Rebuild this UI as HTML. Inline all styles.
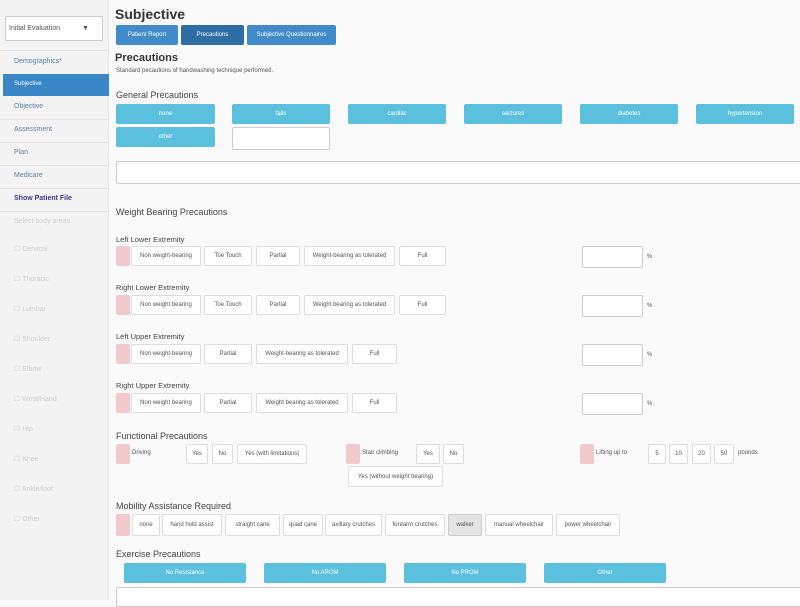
<!DOCTYPE html><html><head><style>
*{box-sizing:border-box;margin:0;padding:0}
body{width:800px;height:600px;overflow:hidden;background:#fafafa;font-family:"Liberation Sans",sans-serif;position:relative;color:#333}
div,span{position:absolute}
.side{left:0;top:0;width:109px;height:600px;background:#f3f3f3;border-right:1px solid #e4e4e4}
.si{left:14px;font-size:7px;color:#5a7fa8}
.sl{left:0;width:109px;height:1px;background:#e6e6e6}
.fd{left:14px;font-size:7px;color:#cfcfcf}
.b{background:#fff;border:1px solid #ddd;border-radius:2px;font-size:6px;color:#555;text-align:center;display:flex;align-items:center;justify-content:center;white-space:nowrap}
.r{background:#f2c9cc;border-radius:2px;width:14px}
.c{background:#5bc0de;border-radius:2px;font-size:6px;color:#fff;display:flex;align-items:center;justify-content:center;height:20px}
.t{background:#428bca;color:#fff;font-size:6px;display:flex;align-items:center;justify-content:center;border-radius:2px;height:20px;top:25px}
.h{font-size:9px;color:#444}
.lb{font-size:7.5px;color:#444}
.in{background:#fff;border:1px solid #ccc;border-radius:2px}
.tx{font-size:6px;color:#555}
</style></head><body>
<div class="side">
<div class="in" style="left:5px;top:16px;width:98px;height:25px;font-size:7px;color:#555;padding:8px 3px">Initial Evaluation<span style="left:76px;top:8px;font-size:7px">▼</span></div>
<div class="sl" style="top:50px"></div>
<div class="si" style="top:58px">Demographics*</div>
<div style="left:3px;top:74px;width:106px;height:22px;background:#3a87c8"></div>
<div class="si" style="top:81px;color:#fff;font-size:6px">Subjective</div>
<div class="si" style="top:103px">Objective</div>
<div class="sl" style="top:119px"></div>
<div class="si" style="top:126px">Assessment</div>
<div class="sl" style="top:142px"></div>
<div class="si" style="top:149px">Plan</div>
<div class="sl" style="top:165px"></div>
<div class="si" style="top:172px">Medicare</div>
<div class="sl" style="top:188px"></div>
<div class="si" style="top:195px;color:#3a3a8a;font-weight:bold">Show Patient File</div>
<div class="sl" style="top:211px"></div>
<div class="fd" style="top:218px">Select body areas</div>
<div class="fd" style="top:245px">☐ Cervical</div>
<div class="fd" style="top:275px">☐ Thoracic</div>
<div class="fd" style="top:305px">☐ Lumbar</div>
<div class="fd" style="top:335px">☐ Shoulder</div>
<div class="fd" style="top:365px">☐ Elbow</div>
<div class="fd" style="top:395px">☐ Wrist/Hand</div>
<div class="fd" style="top:425px">☐ Hip</div>
<div class="fd" style="top:455px">☐ Knee</div>
<div class="fd" style="top:485px">☐ Ankle/foot</div>
<div class="fd" style="top:515px">☐ Other</div>
</div>

<div style="left:115px;top:6px;font-size:14px;font-weight:bold;color:#333">Subjective</div>
<div class="t" style="left:116px;width:62px">Patient Report</div>
<div class="t" style="left:181px;width:63px;background:#2f6ea5">Precautions</div>
<div class="t" style="left:247px;width:89px">Subjective Questionnaires</div>
<div style="left:115px;top:52px;font-size:11px;font-weight:bold;color:#333">Precautions</div>
<div class="tx" style="left:116px;top:68px">Standard pecautions of handwashing technique performed.</div>
<div class="h" style="left:116px;top:90px">General Precautions</div>
<div class="c" style="left:116px;top:104px;width:99px">none</div>
<div class="c" style="left:232px;top:104px;width:98px">falls</div>
<div class="c" style="left:348px;top:104px;width:98px">cardiac</div>
<div class="c" style="left:464px;top:104px;width:98px">seizures</div>
<div class="c" style="left:580px;top:104px;width:98px">diabetes</div>
<div class="c" style="left:696px;top:104px;width:98px">hypertension</div>
<div class="c" style="left:116px;top:127px;width:99px">other</div>
<div class="in" style="left:232px;top:127px;width:98px;height:23px"></div>
<div class="in" style="left:116px;top:161px;width:690px;height:23px"></div>

<div class="h" style="left:116px;top:207px">Weight Bearing Precautions</div>

<div class="lb" style="left:116px;top:235px">Left Lower Extremity</div>
<div class="r" style="left:116px;top:246px;height:20px"></div>
<div class="b" style="left:131px;top:246px;width:70px;height:20px">Non weight-bearing</div>
<div class="b" style="left:204px;top:246px;width:48px;height:20px">Toe Touch</div>
<div class="b" style="left:256px;top:246px;width:44px;height:20px">Partial</div>
<div class="b" style="left:304px;top:246px;width:91px;height:20px">Weight-bearing as tolerated</div>
<div class="b" style="left:399px;top:246px;width:47px;height:20px">Full</div>
<div class="in" style="left:582px;top:246px;width:61px;height:22px"></div><div class="tx" style="left:647px;top:254px">%</div>

<div class="lb" style="left:116px;top:283px">Right Lower Extremity</div>
<div class="r" style="left:116px;top:295px;height:20px"></div>
<div class="b" style="left:131px;top:295px;width:70px;height:20px">Non weight bearing</div>
<div class="b" style="left:204px;top:295px;width:48px;height:20px">Toe Touch</div>
<div class="b" style="left:256px;top:295px;width:44px;height:20px">Partial</div>
<div class="b" style="left:304px;top:295px;width:91px;height:20px">Weight bearing as tolerated</div>
<div class="b" style="left:399px;top:295px;width:47px;height:20px">Full</div>
<div class="in" style="left:582px;top:295px;width:61px;height:22px"></div><div class="tx" style="left:647px;top:303px">%</div>

<div class="lb" style="left:116px;top:332px">Left Upper Extremity</div>
<div class="r" style="left:116px;top:344px;height:20px"></div>
<div class="b" style="left:131px;top:344px;width:70px;height:20px">Non weight-bearing</div>
<div class="b" style="left:204px;top:344px;width:48px;height:20px">Partial</div>
<div class="b" style="left:256px;top:344px;width:92px;height:20px">Weight-bearing as tolerated</div>
<div class="b" style="left:352px;top:344px;width:45px;height:20px">Full</div>
<div class="in" style="left:582px;top:344px;width:61px;height:22px"></div><div class="tx" style="left:647px;top:352px">%</div>

<div class="lb" style="left:116px;top:381px">Right Upper Extremity</div>
<div class="r" style="left:116px;top:393px;height:20px"></div>
<div class="b" style="left:131px;top:393px;width:70px;height:20px">Non weight bearing</div>
<div class="b" style="left:204px;top:393px;width:48px;height:20px">Partial</div>
<div class="b" style="left:256px;top:393px;width:92px;height:20px">Weight bearing as tolerated</div>
<div class="b" style="left:352px;top:393px;width:45px;height:20px">Full</div>
<div class="in" style="left:582px;top:393px;width:61px;height:22px"></div><div class="tx" style="left:647px;top:401px">%</div>

<div class="h" style="left:116px;top:431px">Functional Precautions</div>
<div class="r" style="left:116px;top:444px;height:20px"></div><div class="tx" style="left:132px;top:450px">Driving</div>
<div class="b" style="left:186px;top:444px;width:22px;height:20px">Yes</div>
<div class="b" style="left:212px;top:444px;width:21px;height:20px">No</div>
<div class="b" style="left:237px;top:444px;width:70px;height:20px">Yes (with limitations)</div>
<div class="r" style="left:346px;top:444px;height:20px"></div><div class="tx" style="left:362px;top:450px">Stair climbing</div>
<div class="b" style="left:416px;top:444px;width:24px;height:20px">Yes</div>
<div class="b" style="left:443px;top:444px;width:21px;height:20px">No</div>
<div class="b" style="left:348px;top:466px;width:95px;height:21px">Yes (without weight bearing)</div>
<div class="r" style="left:580px;top:444px;height:20px"></div><div class="tx" style="left:596px;top:450px">Lifting up to</div>
<div class="b" style="left:648px;top:444px;width:18px;height:20px">5</div>
<div class="b" style="left:669px;top:444px;width:19px;height:20px">10</div>
<div class="b" style="left:692px;top:444px;width:19px;height:20px">20</div>
<div class="b" style="left:714px;top:444px;width:20px;height:20px">50</div>
<div class="tx" style="left:738px;top:450px">pounds</div>

<div class="h" style="left:116px;top:501px">Mobility Assistance Required</div>
<div class="r" style="left:116px;top:514px;height:22px"></div>
<div class="b" style="left:132px;top:514px;width:28px;height:22px">none</div>
<div class="b" style="left:162px;top:514px;width:60px;height:22px">hand hold assist</div>
<div class="b" style="left:225px;top:514px;width:55px;height:22px">straight cane</div>
<div class="b" style="left:283px;top:514px;width:40px;height:22px">quad cane</div>
<div class="b" style="left:325px;top:514px;width:57px;height:22px">axillary crutches</div>
<div class="b" style="left:385px;top:514px;width:60px;height:22px">forearm crutches</div>
<div class="b" style="left:448px;top:514px;width:34px;height:22px;background:#e4e4e4;border-color:#ccc">walker</div>
<div class="b" style="left:485px;top:514px;width:68px;height:22px">manual wheelchair</div>
<div class="b" style="left:556px;top:514px;width:64px;height:22px">power wheelchair</div>

<div class="h" style="left:116px;top:549px">Exercise Precautions</div>
<div class="c" style="left:124px;top:563px;width:122px">No Resistance</div>
<div class="c" style="left:264px;top:563px;width:122px">No AROM</div>
<div class="c" style="left:404px;top:563px;width:122px">No PROM</div>
<div class="c" style="left:544px;top:563px;width:122px">Other</div>
<div class="in" style="left:116px;top:587px;width:690px;height:20px"></div>
</body></html>
